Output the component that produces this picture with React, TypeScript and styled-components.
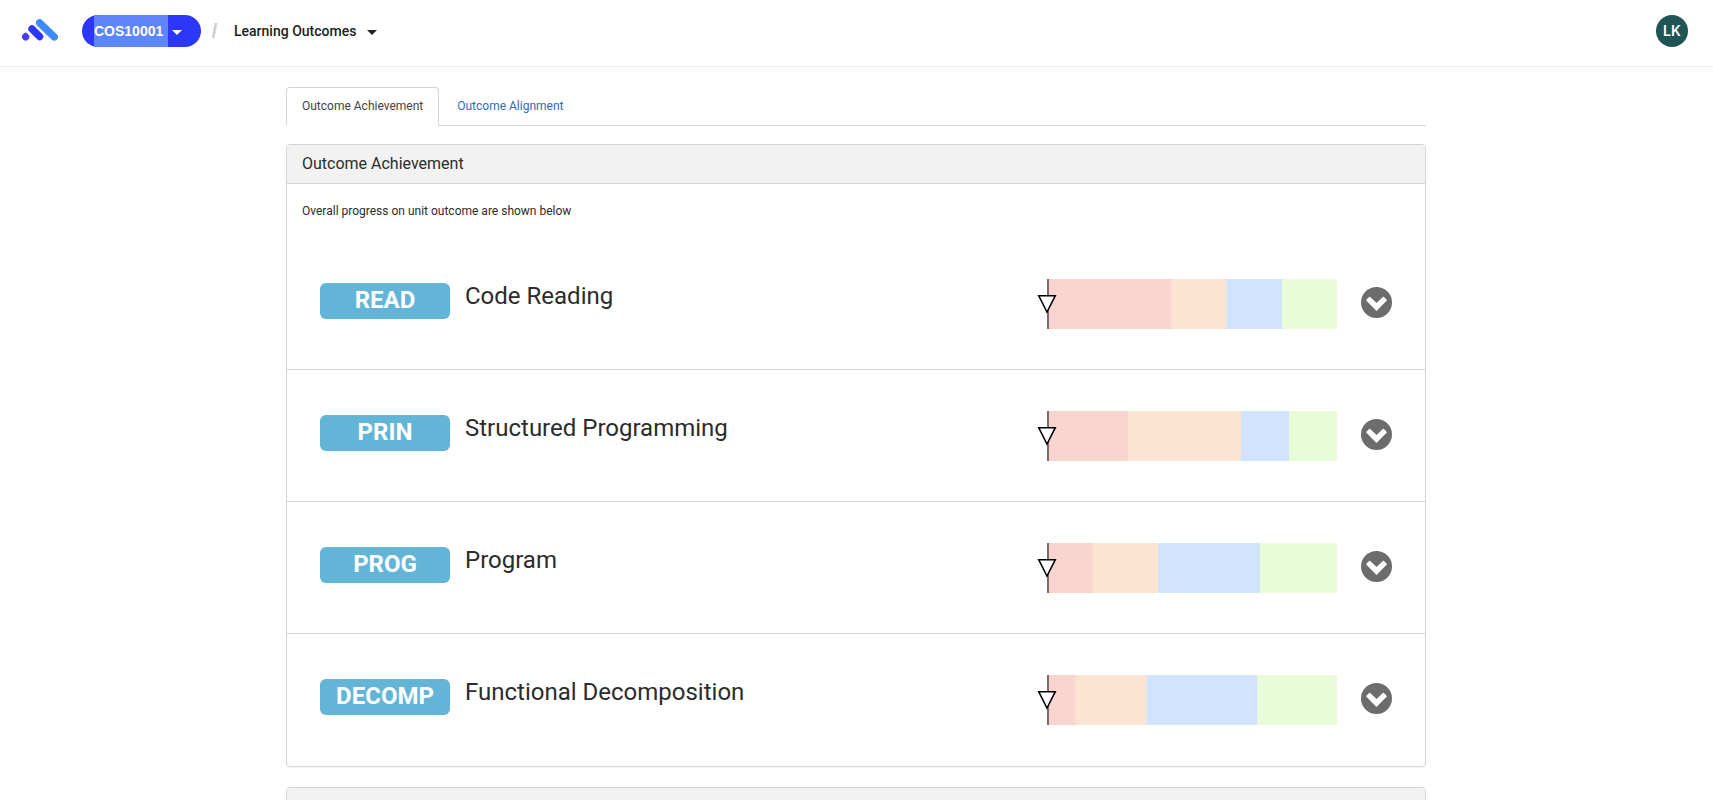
import React from "react";
import styled, { createGlobalStyle } from "styled-components";

const GlobalStyle = createGlobalStyle`
  *, *::before, *::after { box-sizing: border-box; }
  body {
    margin: 0;
    background: #fff;
    color: #2c2c2c;
    font-family: Roboto, "Liberation Sans", sans-serif;
    font-size: 12px;
    line-height: 17px;
  }
  h1, h2, p, ul { margin: 0; padding: 0; font-weight: 400; }
  button { font-family: inherit; border: 0; padding: 0; background: none; cursor: pointer; }
`;

const Page = styled.div`
  height: 100vh;
  overflow-y: auto;
  scrollbar-width: none;
`;

const Header = styled.header`
  display: flex;
  align-items: flex-start;
  height: 67px;
  padding: 15px 25px 0 22px;
  border-bottom: 1px solid #eeeeee;
`;

const HomeLink = styled.a`
  display: flex;
  align-items: center;
  height: 32px;
  padding-bottom: 2px;
  margin-right: 24px;
`;

const UnitButton = styled.button`
  display: flex;
  align-items: center;
  width: 119px;
  height: 32px;
  padding-left: 12px;
  overflow: hidden;
  border-radius: 16px;
  background: #2d37f9;
  color: #fff;
  font-family: "Liberation Sans", Arial, sans-serif;
  font-size: 14px;
  font-weight: 700;
`;

const Selected = styled.span`
  width: 74px;
  line-height: 32px;
  text-align: left;
  background: #5f85fb;
`;

const Caret = styled.span<{ $gap: number }>`
  margin-top: 2px;
  margin-left: ${(p) => p.$gap}px;
  border: 5px solid transparent;
  border-top-color: currentColor;
  border-bottom: 0;
`;

const Slash = styled.span`
  width: 33px;
  padding-right: 6px;
  color: #cccccc;
  font-family: "Liberation Sans", Arial, sans-serif;
  font-size: 20px;
  font-weight: 700;
  line-height: 32px;
  text-align: center;
`;

const ViewButton = styled.button`
  display: flex;
  align-items: center;
  height: 32px;
  color: #212121;
  font-size: 14px;
  font-weight: 500;
`;

const Avatar = styled.button`
  width: 32px;
  height: 32px;
  margin-left: auto;
  border-radius: 50%;
  background: #205558;
  color: #fff;
  font-family: Inter, "Liberation Sans", sans-serif;
  font-size: 14px;
  font-weight: 600;
  line-height: 32px;
`;

const Main = styled.main`
  max-width: 1141px;
  margin: 20px auto 0;
  padding-right: 1px;
`;

const Tabs = styled.nav`
  display: flex;
  gap: 2px;
  margin-bottom: 18px;
  border-bottom: 1px solid #d4d5d6;
`;

const Tab = styled.a<{ $active?: boolean }>`
  margin-bottom: -1px;
  padding: 10px 15px;
  border: 1px solid transparent;
  border-radius: 4px 4px 0 0;
  color: #2f6cb3;
  text-decoration: none;
  ${(p) => p.$active && "color: #444; background: #fff; border-color: #d4d5d6; border-bottom-color: #fff;"}
`;

const Panel = styled.section`
  margin-bottom: 20px;
  border: 1px solid #d4d5d6;
  border-radius: 4px;
  box-shadow: 0 1px 1px rgba(0, 0, 0, 0.05);
`;

const PanelTitle = styled.h1`
  min-height: 39px;
  padding: 9px 15px;
  border-bottom: 1px solid #d4d5d6;
  border-radius: 3px 3px 0 0;
  background: #f2f2f2;
  font-size: 16px;
  line-height: 20px;
`;

const Intro = styled.p`
  padding: 19px 15px 18px;
`;

const Outcomes = styled.ul`
  list-style: none;
`;

const Outcome = styled.li`
  display: flex;
  align-items: flex-start;
  height: 132px;
  padding: 41px 33px 0;
  border-bottom: 1px solid #d4d5d6;
  &:last-child { border-bottom: 0; }
`;

const Badge = styled.span`
  width: 130px;
  height: 36px;
  margin: 4px 15px 0 0;
  border-radius: 6px;
  background: #63b5d7;
  color: #fff;
  font-size: 24px;
  font-weight: 700;
  line-height: 34px;
  text-align: center;
`;

const OutcomeName = styled.h2`
  flex: 1;
  font-size: 24px;
  line-height: 34px;
`;

const Chart = styled.svg`
  flex: none;
  overflow: visible;
`;

const Expand = styled.button`
  display: flex;
  margin: 8px 0 0 24px;
`;

const colours = ["#fad5d0", "#fce4d3", "#d2e3fe", "#e8fcd8"];

type OutcomeData = { code: string; name: string; stops: number[] };

const outcomes: OutcomeData[] = [
  { code: "READ", name: "Code Reading", stops: [0, 124, 179.5, 235, 290] },
  { code: "PRIN", name: "Structured Programming", stops: [0, 81, 194, 242, 290] },
  { code: "PROG", name: "Program", stops: [0, 46, 111, 213, 290] },
  { code: "DECOMP", name: "Functional Decomposition", stops: [0, 28, 99.5, 210.5, 290] },
];

function ProgressChart({ stops, name }: { stops: number[]; name: string }) {
  return (
    <Chart width="290" height="50" role="img" aria-label={`${name} progress`}>
      {colours.map((c, i) => (
        <rect key={c} x={stops[i]} width={stops[i + 1] - stops[i]} height="50" fill={c} />
      ))}
      <rect width="2" height="50" fill="#7d6b69" />
      <path d="M-8.3 16.7H8.3L0 33Z" fill="#fff" stroke="#000" strokeWidth="1.5" />
    </Chart>
  );
}

function Logo() {
  return (
    <svg width="36" height="22" viewBox="0 0 36 22" strokeLinecap="round" aria-hidden="true">
      <path d="M17.6 3.8L32.2 17.9" stroke="#3f8afb" strokeWidth="7.4" />
      <path d="M9.9 9.9L17.7 17.6" stroke="#2d37f9" strokeWidth="7.2" />
      <path d="M4.4 13.7L7.2 16.6A3.7 3.7 0 1 1 1 15.3L2.8 13.8Q3.6 13.1 4.4 13.7Z" fill="#4b3df6" />
    </svg>
  );
}

function ChevronCircle() {
  return (
    <svg width="31" height="31" viewBox="0 0 31 31" aria-hidden="true">
      <circle cx="15.5" cy="15.5" r="15.5" fill="#6c6c6c" />
      <path
        d="M6 13.2L8.6 10.6L15.5 17.2L22.4 10.6L25 13.2L15.5 22.9Z"
        fill="#fff"
        stroke="#fff"
        strokeWidth="1.6"
        strokeLinejoin="round"
      />
    </svg>
  );
}

export default function App() {
  return (
    <Page>
      <GlobalStyle />
      <Header>
        <HomeLink href="#" aria-label="Home"><Logo /></HomeLink>
        <UnitButton type="button"><Selected>COS10001</Selected><Caret $gap={4} /></UnitButton>
        <Slash>/</Slash>
        <ViewButton type="button">Learning Outcomes<Caret $gap={11} /></ViewButton>
        <Avatar type="button">LK</Avatar>
      </Header>
      <Main>
        <Tabs>
          <Tab href="#achievement" $active aria-current="page">Outcome Achievement</Tab>
          <Tab href="#alignment">Outcome Alignment</Tab>
        </Tabs>
        <Panel>
          <PanelTitle>Outcome Achievement</PanelTitle>
          <Intro>Overall progress on unit outcome are shown below</Intro>
          <Outcomes>
            {outcomes.map((o) => (
              <Outcome key={o.code}>
                <Badge>{o.code}</Badge>
                <OutcomeName>{o.name}</OutcomeName>
                <ProgressChart stops={o.stops} name={o.name} />
                <Expand type="button" aria-label={`Show ${o.name}`}><ChevronCircle /></Expand>
              </Outcome>
            ))}
          </Outcomes>
        </Panel>
        <Panel>
          <PanelTitle />
        </Panel>
      </Main>
    </Page>
  );
}
